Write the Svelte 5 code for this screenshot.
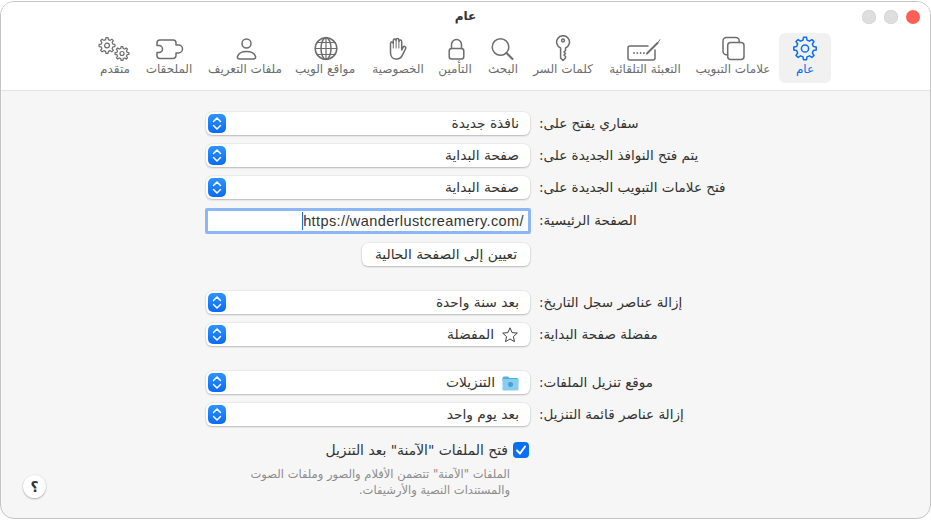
<script>
  function gear(cx, cy, ro, ri, n) {
    const step = (Math.PI * 2) / n;
    let d = '';
    for (let i = 0; i < n; i++) {
      const a = i * step - Math.PI / 2;
      const pts = [
        [ri, a - step * 0.3],
        [ro, a - step * 0.17],
        [ro, a + step * 0.17],
        [ri, a + step * 0.3]
      ];
      for (const [r, t] of pts) {
        d += (d ? 'L' : 'M') + (cx + r * Math.cos(t)).toFixed(2) + ' ' + (cy + r * Math.sin(t)).toFixed(2);
      }
    }
    return d + 'Z';
  }

  const tabs = [
    { label: 'عام', width: 52, active: true,
      icon: `<path d="${gear(18, 13.5, 11.3, 8.6, 8)}"/><circle cx="18" cy="13.5" r="3.6"/>` },
    { label: 'علامات التبويب', width: 92,
      icon: `<rect x="12.7" y="7.4" width="16.3" height="17.2" rx="3"/><path d="M12.7 19.8h-1.2a3.5 3.5 0 0 1-3.5-3.5V6a3.4 3.4 0 0 1 3.4-3.4h9.4a3.4 3.4 0 0 1 3.4 3.4v1.4"/>` },
    { label: 'التعبئة التلقائية', width: 84,
      icon: `<path d="M21 11H3a2 2 0 0 0-2 2v10a2 2 0 0 0 2 2h23a2 2 0 0 0 2-2v-8"/><path stroke-width="2" d="M20 18.500 30.500 8"/><path stroke-width="1" d="M30.500 8 33 4.700"/><g fill="currentColor" stroke="none"><circle cx="7" cy="18" r=".9"/><circle cx="10.300" cy="18" r=".9"/><circle cx="13.600" cy="18" r=".9"/><circle cx="16.900" cy="18" r=".9"/></g>` },
    { label: 'كلمات السر', width: 80,
      icon: `<path d="M15.600 13V23L18 25.500 20.500 23V21.500L19 20 20.500 18.500 19 17 20.500 15.500V13a6.400 6.400 0 1 0-4.900 0Z"/><circle cx="18" cy="5.500" r="1.400"/>` },
    { label: 'البحث', width: 40,
      icon: `<circle cx="15.500" cy="12" r="8.300"/><path stroke-width="2" d="M21.500 18 27.500 24"/>` },
    { label: 'التأمين', width: 56,
      icon: `<rect x="12.200" y="13.500" width="14.600" height="10.500" rx="2.500"/><path d="M14.500 13.500V9.500a5 5 0 0 1 10 0v4"/>` },
    { label: 'الخصوصية', width: 58,
      icon: `<path d="M10.500 17.500V8.500a1.400 1.400 0 0 1 2.800 0V5.500a1.400 1.400 0 0 1 2.800 0V5a1.400 1.400 0 0 1 2.800 0v1.500a1.400 1.400 0 0 1 2.800 0V15l1.500-2.800a1.400 1.400 0 0 1 2.500 1.300l-3.300 6.600c-1.200 2.500-3 3.900-5.600 3.900h-1c-3 0-5.300-2.300-5.300-6.500Z"/><path stroke-width="1" d="M13.300 8.500V13M16.100 5.500V13M18.900 6.500V13"/>` },
    { label: 'مواقع الويب', width: 88,
      icon: `<circle cx="19" cy="13.500" r="10.800"/><ellipse cx="19" cy="13.500" rx="5" ry="10.800"/><path stroke-width="1.200" d="M19 2.700V24.300M8.200 13.500H29.800M10 7.500H28M10 19.500H28"/>` },
    { label: 'ملفات التعريف', width: 72,
      icon: `<circle cx="19.500" cy="8.500" r="4.500"/><path d="M12.500 24h14c1.500 0 2.500-1 2-2.500-1-3-4.500-5-9-5s-8 2-9 5c-.5 1.500.5 2.500 2 2.500Z"/>` },
    { label: 'الملحقات', width: 80,
      icon: `<path d="M6 8a3 3 0 0 1 3-3H22a3 3 0 0 1 3 3v2h2.500a4 4 0 0 1 0 8H25v2.500a3 3 0 0 1-3 3H9a3 3 0 0 1-3-3v-3H8a3.500 3.500 0 0 0 0-7H6Z"/>` },
    { label: 'متقدم', width: 28,
      icon: `<path stroke-width="1.200" d="${gear(10, 10.5, 8, 6, 8)}"/><circle stroke-width="1.200" cx="10" cy="10.500" r="2.400"/><path stroke-width="1.200" d="${gear(25, 18.5, 7, 5.2, 8)}"/><circle stroke-width="1.200" cx="25" cy="18.500" r="2"/>` }
  ];
</script>

{#snippet popup(text, icon)}
  <div class="popup">
    <span class="stepper">
      <svg width="18" height="19" viewBox="0 0 18 19"><path d="M5.500 7.500 9 4l3.500 3.500M5.500 11.500 9 15l3.500-3.500"/></svg>
    </span>
    <span class="value">
      {#if icon === 'star'}
        <svg class="star" width="18" height="18" viewBox="0 0 18 18"><path d="M9 1.800l2.100 4.800 5.200.5-3.900 3.500 1.100 5.100L9 13l-4.500 2.700 1.100-5.100-3.900-3.500 5.200-.5Z"/></svg>
      {:else if icon === 'folder'}
        <svg width="17" height="16" viewBox="0 0 17 16"><path fill="#4fb0e0" d="M.500 3a1.500 1.500 0 0 1 1.500-1.500h4L7.500 3H15a1.500 1.500 0 0 1 1.500 1.500V6H.500Z"/><rect x=".5" y="4" width="16" height="11.500" rx="1.200" fill="#86cdf0"/><circle cx="8.500" cy="9.500" r="2.500" fill="#4a9fd0"/></svg>
      {/if}
      <span class="text">{text}</span>
    </span>
  </div>
{/snippet}

<div class="window">
  <header class="toolbar">
    <div class="titlebar">
      <h1>عام</h1>
      <div class="lights"><i class="red"></i><i></i><i></i></div>
    </div>
    <nav class="tabs">
      {#each tabs as tab}
        <div class="tab" class:active={tab.active} style="width:{tab.width}px">
          <svg width="36" height="28" viewBox="0 0 36 28">{@html tab.icon}</svg>
          <span>{tab.label}</span>
        </div>
      {/each}
    </nav>
  </header>

  <main class="body">
    <div class="form">
      {@render popup('نافذة جديدة')}
      <label>سفاري يفتح على:</label>
      {@render popup('صفحة البداية')}
      <label>يتم فتح النوافذ الجديدة على:</label>
      {@render popup('صفحة البداية')}
      <label>فتح علامات التبويب الجديدة على:</label>
      <div class="url"><span class="caret">https://wanderlustcreamery.com/</span></div>
      <label>الصفحة الرئيسية:</label>
      <button class="set-current">تعيين إلى الصفحة الحالية</button>
      <span></span>

      {@render popup('بعد سنة واحدة')}
      <label class="group">إزالة عناصر سجل التاريخ:</label>
      {@render popup('المفضلة', 'star')}
      <label>مفضلة صفحة البداية:</label>

      {@render popup('التنزيلات', 'folder')}
      <label class="group">موقع تنزيل الملفات:</label>
      {@render popup('بعد يوم واحد')}
      <label>إزالة عناصر قائمة التنزيل:</label>

      <div class="safe">
        <div class="check-row">
          <span class="checkbox"><svg width="16" height="16" viewBox="0 0 16 16"><path d="M4 8.500 7 11.500 12 4.500"/></svg></span>
          <span>فتح الملفات "الآمنة" بعد التنزيل</span>
        </div>
        <p>الملفات "الآمنة" تتضمن الأفلام والصور وملفات الصوت والمستندات النصية والأرشيفات.</p>
      </div>
    </div>
    <button class="help">؟</button>
  </main>
</div>

<style>
  :global(body) {
    background: #fff;
    font-family: "DejaVu Sans", "Noto Sans", sans-serif;
  }
  .window {
    box-sizing: border-box;
    width: 931px;
    height: 518px;
    margin-top: 1px;
    border: 1px solid #c4c4c4;
    border-radius: 14px;
    overflow: hidden;
    display: flex;
    flex-direction: column;
    background: #f6f6f6;
    position: relative;
  }
  .toolbar {
    height: 89px;
    flex: none;
    box-sizing: border-box;
    background: #fff;
    border-bottom: 1px solid #e4e4e4;
  }
  .titlebar {
    height: 29px;
    box-sizing: border-box;
    padding-bottom: 2px;
    position: relative;
    display: flex;
    justify-content: center;
    align-items: center;
  }
  h1 {
    margin: 0;
    font-size: 12px;
    font-weight: 700;
    color: #333;
  }
  .lights {
    position: absolute;
    right: 10px;
    top: 8px;
    display: flex;
    flex-direction: row-reverse;
    gap: 8px;
  }
  .lights i {
    width: 14px;
    height: 14px;
    border-radius: 50%;
    background: #dedede;
    box-shadow: inset 0 0 0 .5px #d0d0d0;
  }
  .lights i.red {
    background: #ff5f57;
    box-shadow: none;
  }
  .tabs {
    display: flex;
    flex-direction: row-reverse;
    padding-right: 99px;
    margin-top: 2px;
  }
  .tab {
    height: 50px;
    flex: none;
    display: flex;
    flex-direction: column;
    align-items: center;
    border-radius: 6px;
    color: #6d6d6d;
    padding-top: 2px;
    box-sizing: border-box;
    font-size: 12px;
    white-space: nowrap;
  }
  .tab span {
    line-height: 14px;
    margin-top: -1px;
  }
  .tab svg {
    flex: none;
    fill: none;
    stroke: currentColor;
    stroke-width: 1.500;
    stroke-linejoin: round;
    stroke-linecap: round;
  }
  .tab.active {
    background: #f1f1f1;
    color: #0a6ff0;
  }
  .body {
    flex: 1;
    position: relative;
  }
  .form {
    margin-left: 205px;
    padding-top: 21px;
    display: grid;
    grid-template-columns: 324px auto;
    column-gap: 9px;
    row-gap: 9px;
    justify-content: start;
    align-items: center;
    justify-items: start;
  }
  label {
    font-size: 13.500px;
    color: #333;
    direction: rtl;
    white-space: nowrap;
    padding-bottom: 2px;
  }
  .popup {
    width: 100%;
    height: 23px;
    box-sizing: border-box;
    background: #fff;
    border-radius: 6px;
    box-shadow: 0 0 0 .5px rgba(0, 0, 0, .07), 0 1px 2px rgba(0, 0, 0, .22);
    display: flex;
    align-items: center;
    justify-content: space-between;
    padding: 0 11px 0 2px;
    font-size: 13.800px;
    color: #333;
  }
  .stepper {
    width: 18px;
    height: 19px;
    border-radius: 5px;
    background: linear-gradient(#2c93ff, #0a6cf5);
  }
  .stepper svg {
    display: block;
    fill: none;
    stroke: #fff;
    stroke-width: 1.500;
    stroke-linecap: round;
    stroke-linejoin: round;
  }
  .value {
    display: flex;
    align-items: center;
    gap: 7px;
    direction: rtl;
  }
  .text {
    padding-bottom: 2px;
  }
  .star {
    fill: none;
    stroke: #444;
    stroke-width: 1;
    stroke-linejoin: round;
  }
  .url {
    width: calc(100% + 2px);
    margin-left: -1px;
    height: 26px;
    box-sizing: border-box;
    background: #fff;
    border: 3px solid #8db6f5;
    border-radius: 2px;
    display: flex;
    align-items: center;
    justify-content: flex-end;
    padding: 0 4px 1px 0;
    font-family: "Liberation Sans", Arial, sans-serif;
    font-size: 14.500px;
    letter-spacing: .4px;
    color: #333;
  }
  .caret {
    border-left: 1.500px solid #1a6fe8;
    line-height: 18px;
  }
  .set-current {
    justify-self: end;
    width: 168px;
    height: 23px;
    padding: 0 0 2px;
    border: 0;
    border-radius: 6px;
    background: #fff;
    box-shadow: 0 0 0 .5px rgba(0, 0, 0, .07), 0 1px 2px rgba(0, 0, 0, .22);
    font: inherit;
    font-size: 13.800px;
    color: #333;
    direction: rtl;
  }
  .group {
    margin-top: 16px;
  }
  .popup:has(+ .group) {
    margin-top: 16px;
  }
  .safe {
    grid-column: 1;
    margin-top: 7px;
    direction: rtl;
    font-size: 13.900px;
    color: #333;
  }
  .check-row {
    display: flex;
    align-items: center;
    gap: 5px;
    padding-right: 1px;
  }
  .checkbox {
    width: 16px;
    height: 16px;
    border-radius: 4px;
    background: #0a6ff0;
  }
  .checkbox svg {
    display: block;
    fill: none;
    stroke: #fff;
    stroke-width: 2;
    stroke-linecap: round;
    stroke-linejoin: round;
  }
  .safe p {
    margin: 8px 20px 0 30px;
    font-size: 11.500px;
    line-height: 16px;
    color: #8c8c8c;
  }
  .help {
    position: absolute;
    left: 22px;
    top: 384px;
    width: 23px;
    height: 23px;
    padding: 0;
    border: 0;
    border-radius: 50%;
    background: #fff;
    box-shadow: 0 0 0 .5px rgba(0, 0, 0, .07), 0 1px 2px rgba(0, 0, 0, .25);
    font: inherit;
    font-size: 14px;
    font-weight: 700;
    color: #333;
  }
</style>
